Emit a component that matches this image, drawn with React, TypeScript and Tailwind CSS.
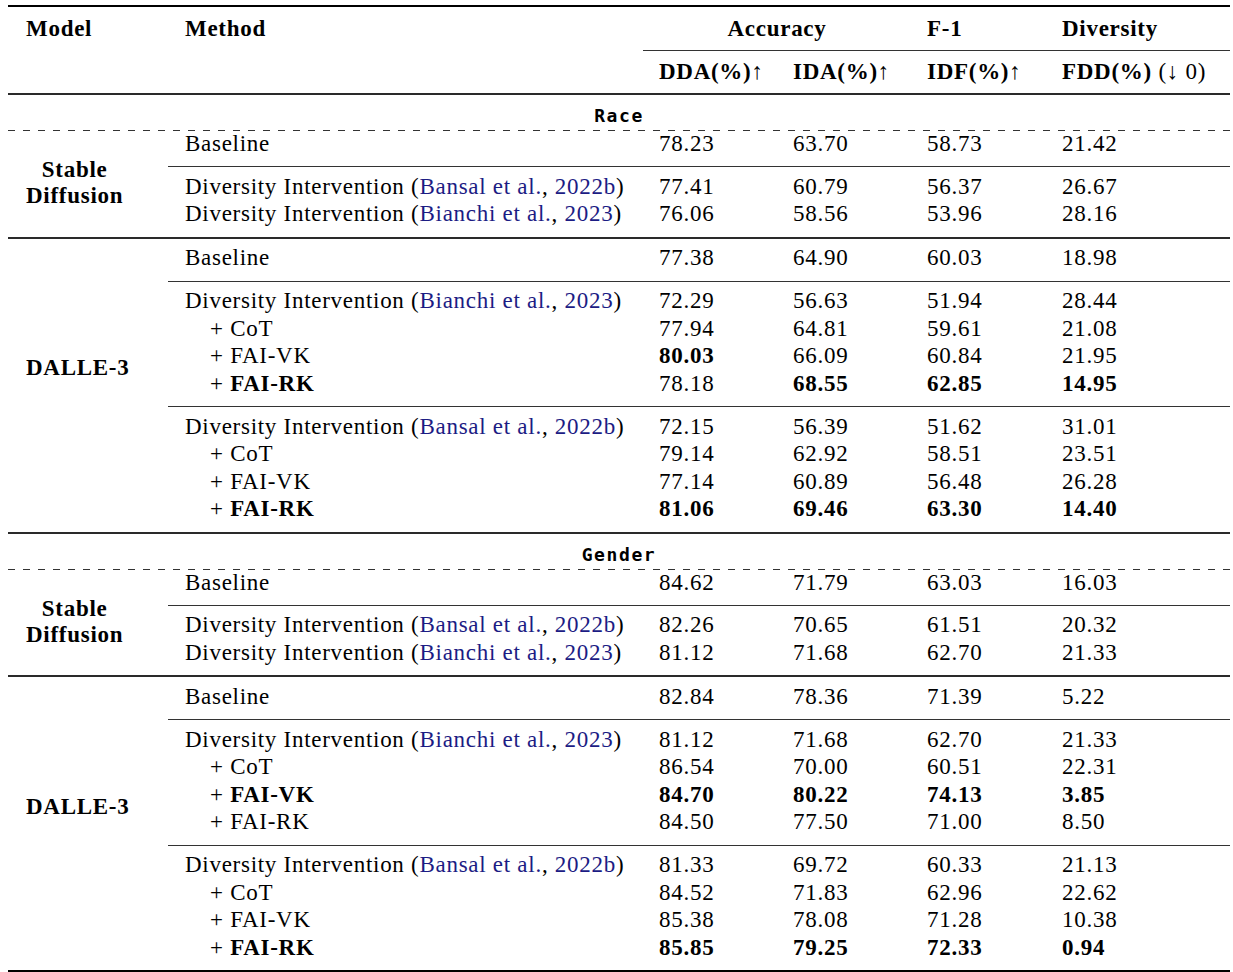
import { Fragment } from "react"
import type { ReactNode } from "react"

type Row = { label: ReactNode; indent?: boolean; vals: string[] }
type Section = { name: string; sd: Row[][]; dalle: Row[][] }

function Cite({ who, year }: { who: string; year: string }) {
  return (
    <>
      (<span className="text-[#1c1c84]">{who} et al.</span>, <span className="text-[#1c1c84]">{year}</span>)
    </>
  )
}

const base = (vals: string[]): Row => ({ label: "Baseline", vals })
const di = (who: string, year: string, vals: string[]): Row => ({
  label: (
    <>
      Diversity Intervention <Cite who={who} year={year} />
    </>
  ),
  vals,
})
const plus = (name: string, vals: string[], bold = false): Row => ({
  label: <>+ {bold ? <span className="font-bold">{name}</span> : name}</>,
  indent: true,
  vals,
})

// "*" marks a bold (best) value
const sections: Section[] = [
  {
    name: "Race",
    sd: [
      [base(["78.23", "63.70", "58.73", "21.42"])],
      [
        di("Bansal", "2022b", ["77.41", "60.79", "56.37", "26.67"]),
        di("Bianchi", "2023", ["76.06", "58.56", "53.96", "28.16"]),
      ],
    ],
    dalle: [
      [base(["77.38", "64.90", "60.03", "18.98"])],
      [
        di("Bianchi", "2023", ["72.29", "56.63", "51.94", "28.44"]),
        plus("CoT", ["77.94", "64.81", "59.61", "21.08"]),
        plus("FAI-VK", ["*80.03", "66.09", "60.84", "21.95"]),
        plus("FAI-RK", ["78.18", "*68.55", "*62.85", "*14.95"], true),
      ],
      [
        di("Bansal", "2022b", ["72.15", "56.39", "51.62", "31.01"]),
        plus("CoT", ["79.14", "62.92", "58.51", "23.51"]),
        plus("FAI-VK", ["77.14", "60.89", "56.48", "26.28"]),
        plus("FAI-RK", ["*81.06", "*69.46", "*63.30", "*14.40"], true),
      ],
    ],
  },
  {
    name: "Gender",
    sd: [
      [base(["84.62", "71.79", "63.03", "16.03"])],
      [
        di("Bansal", "2022b", ["82.26", "70.65", "61.51", "20.32"]),
        di("Bianchi", "2023", ["81.12", "71.68", "62.70", "21.33"]),
      ],
    ],
    dalle: [
      [base(["82.84", "78.36", "71.39", "5.22"])],
      [
        di("Bianchi", "2023", ["81.12", "71.68", "62.70", "21.33"]),
        plus("CoT", ["86.54", "70.00", "60.51", "22.31"]),
        plus("FAI-VK", ["*84.70", "*80.22", "*74.13", "*3.85"], true),
        plus("FAI-RK", ["84.50", "77.50", "71.00", "8.50"]),
      ],
      [
        di("Bansal", "2022b", ["81.33", "69.72", "60.33", "21.13"]),
        plus("CoT", ["84.52", "71.83", "62.96", "22.62"]),
        plus("FAI-VK", ["85.38", "78.08", "71.28", "10.38"]),
        plus("FAI-RK", ["*85.85", "*79.25", "*72.33", "*0.94"], true),
      ],
    ],
  },
]

function Group({ rows, cls }: { rows: Row[]; cls: string }) {
  return (
    <div className={cls}>
      {rows.map((r, i) => (
        <div key={i} className="grid grid-cols-[475px_134px_134px_135px_184px]">
          <div className={r.indent ? "pl-[42px]" : "pl-[17px]"}>{r.label}</div>
          {r.vals.map((v, j) => (
            <div key={j} className={v.startsWith("*") ? "pl-[16px] font-bold" : "pl-[16px]"}>
              {v.replace("*", "")}
            </div>
          ))}
        </div>
      ))}
    </div>
  )
}

function Header() {
  return (
    <div className="flex font-bold">
      <div className="w-[160px] pl-[18px] pt-[7.5px]">Model</div>
      <div className="w-[475px] pl-[17px] pt-[7.5px]">Method</div>
      <div className="w-[587px]">
        <div className="grid grid-cols-[268px_135px_184px] py-[7.5px]">
          <div className="text-center">Accuracy</div>
          <div className="pl-[16px]">F-1</div>
          <div className="pl-[16px]">Diversity</div>
        </div>
        <div className="h-px bg-[#333]" />
        <div className="grid grid-cols-[134px_134px_135px_184px] py-[7.5px]">
          <div className="pl-[16px]">
            DDA(%)<span className="font-normal">↑</span>
          </div>
          <div className="pl-[16px]">
            IDA(%)<span className="font-normal">↑</span>
          </div>
          <div className="pl-[16px]">
            IDF(%)<span className="font-normal">↑</span>
          </div>
          <div className="pl-[16px]">
            FDD(%) <span className="font-normal">(↓ 0)</span>
          </div>
        </div>
      </div>
    </div>
  )
}

function SectionBlock({ s, last }: { s: Section; last: boolean }) {
  return (
    <>
      <div className="pt-[10px] pb-[4px] text-center font-[family-name:DejaVu_Sans_Mono,monospace] text-[18px] leading-[21px] font-bold tracking-[1.6px]">
        {s.name}
      </div>
      {/* dashed rule under the category label */}
      <div className="h-px bg-[repeating-linear-gradient(90deg,#333_0_7px,transparent_7px_15px)]" />
      <div className="-mt-px flex">
        <div className="flex w-[160px] items-center pl-[18px] font-bold leading-[26px]">
          <div className="text-center">
            Stable
            <br />
            Diffusion
          </div>
        </div>
        <div className="w-[1062px]">
          <Group rows={s.sd[0]} cls="pb-[8.5px]" />
          <div className="h-px bg-[#333]" />
          <Group rows={s.sd[1]} cls="pt-[5.5px] pb-[9px]" />
        </div>
      </div>
      <div className="h-[2px] bg-[#2a2a2a]" />
      <div className="flex">
        <div className="flex w-[160px] items-center pb-[34px] pl-[18px] font-bold">DALLE-3</div>
        <div className="w-[1062px]">
          {s.dalle.map((g, i) => (
            <Fragment key={i}>
              {i > 0 && <div className="h-px bg-[#333]" />}
              <Group rows={g} cls="pt-[5.5px] pb-[9px]" />
            </Fragment>
          ))}
        </div>
      </div>
      <div className={last ? "h-[3px] bg-black" : "h-[2px] bg-[#2a2a2a]"} />
    </>
  )
}

export default function App() {
  return (
    <div className="min-h-[972px] bg-white pt-[5px] font-[family-name:Liberation_Serif,Times_New_Roman,serif] text-[23px] leading-[27.5px] tracking-[0.72px] text-black">
      <div className="ml-[8px] w-[1222px]">
        <div className="h-[2px] bg-black" />
        <Header />
        <div className="h-[2px] bg-[#2a2a2a]" />
        {sections.map((s, i) => (
          <SectionBlock key={s.name} s={s} last={i === sections.length - 1} />
        ))}
      </div>
    </div>
  )
}
